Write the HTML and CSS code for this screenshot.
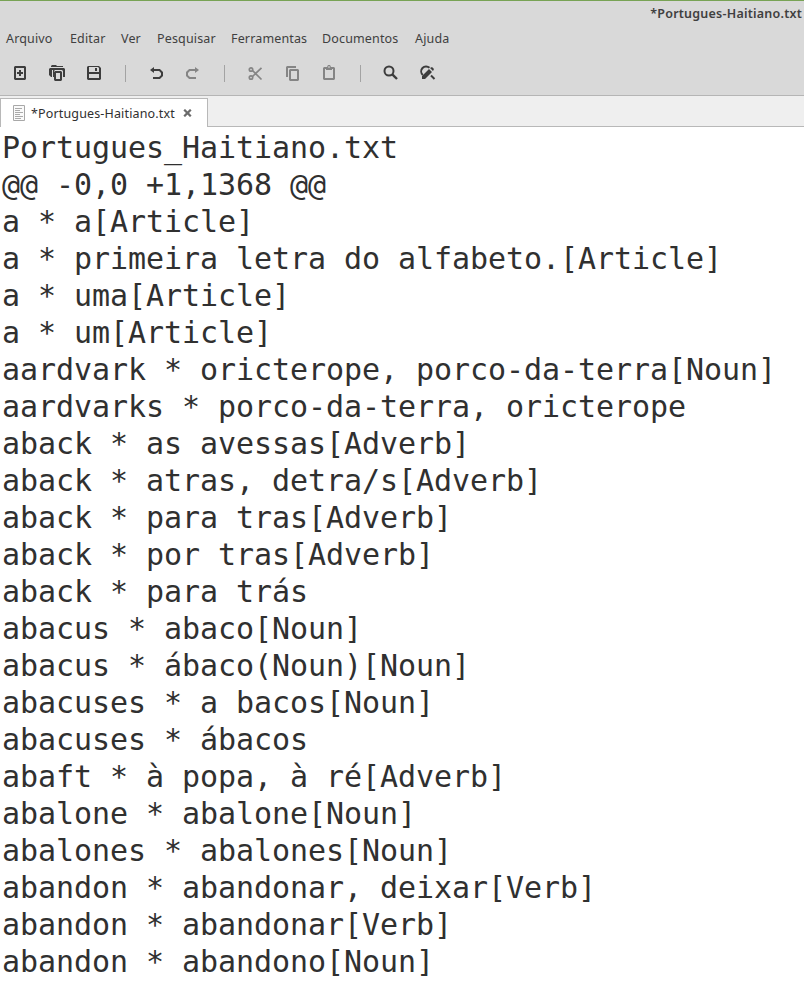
FILE: index.html
```html
<!DOCTYPE html>
<html lang="pt">
<head>
<meta charset="utf-8">
<title>*Portugues-Haitiano.txt</title>
<link rel="stylesheet" href="styles.css">
</head>
<body>
<header class="chrome">
  <div class="title">*Portugues-Haitiano.txt</div>
  <nav class="menu">
    <span>Arquivo</span><span>Editar</span><span>Ver</span><span>Pesquisar</span><span>Ferramentas</span><span>Documentos</span><span>Ajuda</span>
  </nav>
  <div class="toolbar">
    <svg class="icon" viewBox="0 0 16 16"><path class="fill" fill-rule="evenodd" d="M3 1h10l1 1v12l-1 1H3l-1-1V2zM4 3v10h8V3zM7 5h2v2h2v2H9v2H7V9H5V7h2z"/></svg>
    <svg class="icon" viewBox="0 0 16 16"><path class="fill" fill-rule="evenodd" d="M2 1l1-1h4l1 1h6v1H2zM0 4l1-1h14l1 1v8h-2V6l-1-1H6L5 6v6H4V5H3v7H2L0 10zM6 6h6l1 1v8l-1 1H6l-1-1V7zM7 8v6h4V8z"/></svg>
    <svg class="icon" viewBox="0 0 16 16"><path class="fill" fill-rule="evenodd" d="M2 1h11l2 2v11l-1 1H2l-1-1V2zM3 2v5h10V3l-1-1zM3 9v4h10V9zM9 3h2v3H9z"/></svg>
    <i class="sep"></i>
    <svg class="icon" viewBox="0 0 16 16"><path class="fill" d="M2 5l4-3v6z"/><path class="line" d="M5 5h6.500L14 7.500v3L11.500 13H5"/></svg>
    <svg class="icon dim" viewBox="0 0 16 16"><path class="fill" d="M14 5l-4-3v6z"/><path class="line" d="M11 5H4.500L2 7.500v3L4.500 13H11"/></svg>
    <i class="sep"></i>
    <svg class="icon dim" viewBox="0 0 16 16"><path class="line thin" d="M5.500 5.500L14.500 14.500M5.500 11.500L14.500 2.800"/><circle class="line thin" cx="4" cy="4.500" r="1.700"/><circle class="line thin" cx="4" cy="12.500" r="1.700"/></svg>
    <svg class="icon dim" viewBox="0 0 16 16"><path class="fill" fill-rule="evenodd" d="M3 1h9v2H4v9H2V2zM6 4h8l1 1v10l-1 1H6l-1-1V5zM7 6v8h6V6z"/></svg>
    <svg class="icon dim" viewBox="0 0 16 16"><path class="fill" fill-rule="evenodd" d="M3 2h3l1-2h2l1 2h3l1 1v11l-1 1H3l-1-1V3zM4 4v9h8V4h-1v1H5V4zM7.500 1v2h1V1z"/></svg>
    <i class="sep"></i>
    <svg class="icon" viewBox="0 0 16 16"><circle class="line" cx="6" cy="6" r="4.500"/><path class="line bold" d="M9.300 9.300L14 14"/></svg>
    <svg class="icon" viewBox="0 0 16 16"><path class="line" d="M2.800 10A4.800 4.800 0 0 1 9.500 2.700"/><path class="fill" d="M2 14V11l7-7 3 3-7 7zM10 3l2-1 2 2-1 2z"/><path class="line" d="M11 10.500L14.500 14"/></svg>
  </div>
</header>
<div class="tabs">
  <div class="tab">
    <svg class="doc" viewBox="0 0 12 16"><path class="page" d="M.5.500h11v15H.5z"/><path class="rows" d="M2 3.500h7M2 5.500h5M2 7.500h8M2 9.500h5M2 11.500h8M2 13.500h6"/></svg>
    <span class="name">*Portugues-Haitiano.txt</span>
    <svg class="close" viewBox="0 0 8 8"><path d="M.7.700l6.600 6.600M7.300.700L.7 7.300"/></svg>
  </div>
</div>
<pre class="editor">Portugues_Haitiano.txt
@@ -0,0 +1,1368 @@
a * a[Article]
a * primeira letra do alfabeto.[Article]
a * uma[Article]
a * um[Article]
aardvark * oricterope, porco-da-terra[Noun]
aardvarks * porco-da-terra, oricterope
aback * as avessas[Adverb]
aback * atras, detra/s[Adverb]
aback * para tras[Adverb]
aback * por tras[Adverb]
aback * para trás
abacus * abaco[Noun]
abacus * ábaco(Noun)[Noun]
abacuses * a bacos[Noun]
abacuses * ábacos
abaft * à popa, à ré[Adverb]
abalone * abalone[Noun]
abalones * abalones[Noun]
abandon * abandonar, deixar[Verb]
abandon * abandonar[Verb]
abandon * abandono[Noun]</pre>
</body>
</html>
```
FILE: styles.css
```css
* { box-sizing: border-box; }
body {
  margin: 0;
  height: 981px;
  overflow: hidden;
  background: #fff;
  color: #303030;
  font-family: "Noto Sans", "Open Sans", sans-serif;
  font-size: 13px;
}
.chrome {
  height: 96px;
  background: #d9d9d9;
  border-top: 1px solid #78a355;
  border-bottom: 1px solid #b5b5b5;
}
.title {
  height: 25px;
  padding-right: 2px;
  line-height: 25px;
  text-align: right;
  font-weight: 600;
  font-size: 12.500px;
  letter-spacing: 0.230px;
  color: #404040;
}
.menu {
  display: grid;
  grid-template-columns: 64px 51px 36px 74px 91px 93px 36px;
  padding-left: 6px;
  height: 25px;
  line-height: 25px;
  font-size: 12.500px;
  letter-spacing: 0.150px;
  color: #404040;
  white-space: nowrap;
}
.toolbar {
  display: flex;
  align-items: center;
  gap: 21px;
  height: 44px;
  padding-left: 12px;
}
.icon { width: 16px; height: 16px; flex: none; color: #3d3d3d; }
.dim { color: #858585; }
.fill { fill: currentColor; }
.line { fill: none; stroke: currentColor; stroke-width: 2; }
.thin { stroke-width: 1.700; }
.bold { stroke-width: 2.400; }
.sep { width: 1px; height: 17px; margin: 0 1px 0 2px; background: #a3a3a3; }
.tabs {
  height: 31px;
  padding-top: 2px;
  background: linear-gradient(#b8b8b8, #b8b8b8) bottom / 100% 1px no-repeat #efefef;
}
.tab {
  display: flex;
  align-items: center;
  width: 208px;
  height: 29px;
  padding: 0 0 0 12px;
  background: #fff;
  border: 1px solid #b8b8b8;
  border-bottom: 0;
}
.doc { width: 12px; height: 16px; flex: none; }
.page { fill: #fafafa; stroke: #a8a8a8; }
.rows { fill: none; stroke: #aaa; stroke-width: 1.200; }
.name { width: 144px; margin: 0 8px 0 6px; font-size: 12.500px; letter-spacing: 0.150px; white-space: nowrap; }
.close { width: 9px; height: 8px; flex: none; fill: none; stroke: #6b6b6b; stroke-width: 2.200; }
.editor {
  margin: 0;
  padding: 2px 0 0 2px;
  font: 30px/37px "DejaVu Sans Mono", monospace;
  letter-spacing: -0.060px;
}
```
